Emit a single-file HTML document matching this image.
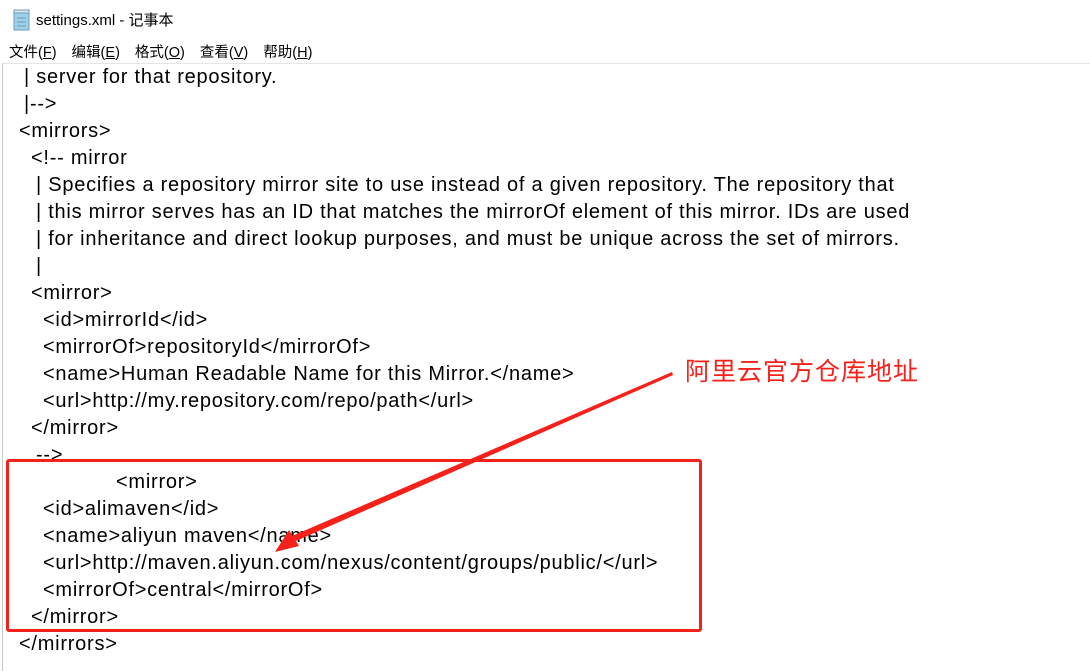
<!DOCTYPE html>
<html><head><meta charset="utf-8"><style>
html,body{margin:0;padding:0;width:1090px;height:671px;overflow:hidden;background:#fff;}
body{position:relative;font-family:"Liberation Sans","Noto Sans CJK SC",sans-serif;color:#000;}
.t{position:absolute;top:9px;left:36px;font-size:15px;}
.m{position:absolute;top:41px;left:9px;font-size:14.5px;}
.m span{margin-right:15px}
.ln{position:absolute;font-size:20px;letter-spacing:0.75px;line-height:27px;white-space:pre;margin-top:1px}
.frame{position:absolute;left:2px;top:63px;width:1088px;height:608px;border-left:1px solid #c8c8c8;border-top:1px solid #e5e5e5;}
</style></head><body>
<svg style="position:absolute;left:12px;top:9px" width="20" height="22" viewBox="0 0 20 22">
<rect x="2" y="3" width="15" height="18" fill="#9fd0ea" stroke="#6a9cb8"/>
<rect x="2" y="1" width="15" height="3" fill="#d8e8f2" stroke="#6a9cb8"/>
<line x1="5" y1="9" x2="14" y2="9" stroke="#6a9cb8"/><line x1="5" y1="13" x2="14" y2="13" stroke="#6a9cb8"/><line x1="5" y1="17" x2="14" y2="17" stroke="#6a9cb8"/>
</svg>
<div class="t">settings.xml - 记事本</div>
<div class="m"><span>文件(<u>F</u>)</span><span>编辑(<u>E</u>)</span><span>格式(<u>O</u>)</span><span>查看(<u>V</u>)</span><span>帮助(<u>H</u>)</span></div>
<div class="frame"></div>
<div class="ln" style="left:24px;top:63px">| server for that repository.</div>
<div class="ln" style="left:24px;top:90px">|--&gt;</div>
<div class="ln" style="left:19px;top:117px">&lt;mirrors&gt;</div>
<div class="ln" style="left:31px;top:144px">&lt;!-- mirror</div>
<div class="ln" style="left:36px;top:171px">| Specifies a repository mirror site to use instead of a given repository. The repository that</div>
<div class="ln" style="left:36px;top:198px">| this mirror serves has an ID that matches the mirrorOf element of this mirror. IDs are used</div>
<div class="ln" style="left:36px;top:225px">| for inheritance and direct lookup purposes, and must be unique across the set of mirrors.</div>
<div class="ln" style="left:36px;top:252px">|</div>
<div class="ln" style="left:31px;top:279px">&lt;mirror&gt;</div>
<div class="ln" style="left:43px;top:306px">&lt;id&gt;mirrorId&lt;/id&gt;</div>
<div class="ln" style="left:43px;top:333px">&lt;mirrorOf&gt;repositoryId&lt;/mirrorOf&gt;</div>
<div class="ln" style="left:43px;top:360px">&lt;name&gt;Human Readable Name for this Mirror.&lt;/name&gt;</div>
<div class="ln" style="left:43px;top:387px">&lt;url&gt;http://my.repository.com/repo/path&lt;/url&gt;</div>
<div class="ln" style="left:31px;top:414px">&lt;/mirror&gt;</div>
<div class="ln" style="left:36px;top:441px">--&gt;</div>
<div class="ln" style="left:116px;top:468px">&lt;mirror&gt;</div>
<div class="ln" style="left:43px;top:495px">&lt;id&gt;alimaven&lt;/id&gt;</div>
<div class="ln" style="left:43px;top:522px">&lt;name&gt;aliyun maven&lt;/name&gt;</div>
<div class="ln" style="left:43px;top:549px">&lt;url&gt;http://maven.aliyun.com/nexus/content/groups/public/&lt;/url&gt;</div>
<div class="ln" style="left:43px;top:576px">&lt;mirrorOf&gt;central&lt;/mirrorOf&gt;</div>
<div class="ln" style="left:31px;top:603px">&lt;/mirror&gt;</div>
<div class="ln" style="left:19px;top:630px">&lt;/mirrors&gt;</div>
<div style="position:absolute;left:6px;top:459px;width:690px;height:167px;border:3px solid #f5221b;border-radius:3px;background:transparent"></div>
<svg style="position:absolute;left:0;top:0" width="1090" height="671">
<polygon points="672,372 673,375 296,541 292,536" fill="#f5221b"/>
<polygon points="275,552 289,530 299,546" fill="#f5221b"/>
</svg>
<div style="position:absolute;left:685px;top:354px;font-size:25px;color:#f5221b;letter-spacing:1px;font-family:'Noto Sans CJK SC',sans-serif;line-height:32px">阿里云官方仓库地址</div>
</body></html>
